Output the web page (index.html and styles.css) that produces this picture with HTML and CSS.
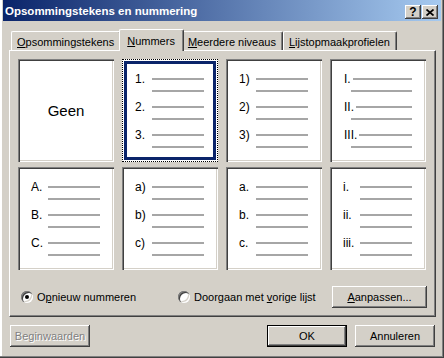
FILE: index.html
```html
<!DOCTYPE html>
<html>
<head>
    <title>Opsommingstekens en nummering</title>
    <link rel="stylesheet" href="styles.css">
</head>
<body>
    <div class="window">
        <div class="titlebar">
            <span class="title">Opsommingstekens en nummering</span>
            <div class="title-buttons">
                <button class="title-btn help">?</button>
                <button class="title-btn close">
                    <svg width="8" height="7" viewBox="0 0 8 7"><path d="M0.5 0.5 L7.5 6.5 M7.5 0.5 L0.5 6.5" stroke="#000" stroke-width="1.7" fill="none"/></svg>
                </button>
            </div>
        </div>

        <div class="content">
            <div class="tabs">
                <div class="tab"><u>O</u>psommingstekens</div>
                <div class="tab active"><u>N</u>ummers</div>
                <div class="tab"><u>M</u>eerdere niveaus</div>
                <div class="tab"><u>L</u>ijstopmaakprofielen</div>
            </div>

            <div class="panel">
                <div class="gallery">
                    <div class="cell none">Geen</div>

                    <div class="cell selected">
                        <div class="item"><span class="num">1.</span><span class="rule"></span><span class="rule cont"></span></div>
                        <div class="item"><span class="num">2.</span><span class="rule"></span><span class="rule cont"></span></div>
                        <div class="item"><span class="num">3.</span><span class="rule"></span><span class="rule cont"></span></div>
                    </div>

                    <div class="cell">
                        <div class="item"><span class="num">1)</span><span class="rule"></span><span class="rule cont"></span></div>
                        <div class="item"><span class="num">2)</span><span class="rule"></span><span class="rule cont"></span></div>
                        <div class="item"><span class="num">3)</span><span class="rule"></span><span class="rule cont"></span></div>
                    </div>

                    <div class="cell roman">
                        <div class="item"><span class="num">I.</span><span class="rule"></span><span class="rule cont"></span></div>
                        <div class="item"><span class="num">II.</span><span class="rule"></span><span class="rule cont"></span></div>
                        <div class="item"><span class="num">III.</span><span class="rule"></span><span class="rule cont"></span></div>
                    </div>

                    <div class="cell">
                        <div class="item"><span class="num">A.</span><span class="rule"></span><span class="rule cont"></span></div>
                        <div class="item"><span class="num">B.</span><span class="rule"></span><span class="rule cont"></span></div>
                        <div class="item"><span class="num">C.</span><span class="rule"></span><span class="rule cont"></span></div>
                    </div>

                    <div class="cell">
                        <div class="item"><span class="num">a)</span><span class="rule"></span><span class="rule cont"></span></div>
                        <div class="item"><span class="num">b)</span><span class="rule"></span><span class="rule cont"></span></div>
                        <div class="item"><span class="num">c)</span><span class="rule"></span><span class="rule cont"></span></div>
                    </div>

                    <div class="cell">
                        <div class="item"><span class="num">a.</span><span class="rule"></span><span class="rule cont"></span></div>
                        <div class="item"><span class="num">b.</span><span class="rule"></span><span class="rule cont"></span></div>
                        <div class="item"><span class="num">c.</span><span class="rule"></span><span class="rule cont"></span></div>
                    </div>

                    <div class="cell">
                        <div class="item"><span class="num">i.</span><span class="rule"></span><span class="rule cont"></span></div>
                        <div class="item"><span class="num">ii.</span><span class="rule"></span><span class="rule cont"></span></div>
                        <div class="item"><span class="num">iii.</span><span class="rule"></span><span class="rule cont"></span></div>
                    </div>
                </div>

                <div class="options">
                    <label class="option first"><span class="radio checked"></span><span>O<u>p</u>nieuw nummeren</span></label>
                    <label class="option"><span class="radio"></span><span>Doorgaan met <u>v</u>orige lijst</span></label>
                    <button class="btn wide"><u>A</u>anpassen...</button>
                </div>
            </div>

            <div class="footer">
                <button class="btn disabled">Beginwaarden</button>
                <button class="btn default">OK</button>
                <button class="btn">Annuleren</button>
            </div>
        </div>
    </div>
</body>
</html>
```

FILE: styles.css
```css
* {
    box-sizing: border-box;
}
body {
    margin: 0;
    background-color: #d4d0c8;
    font-family: "Liberation Sans", Arial, sans-serif;
    font-size: 11px;
    color: #000;
}
.window {
    width: 444px;
    height: 358px;
    padding: 0 3px 3px 3px;
    background-color: #d4d0c8;
    box-shadow: inset -1px -1px #404040, inset -2px -2px #808080, inset 2px 0 #fff;
}
.titlebar {
    display: flex;
    align-items: center;
    height: 21px;
    padding: 0 3px 0 2px;
    background: linear-gradient(to right, #0a246a, #a6caf0);
}
.title {
    flex: 1;
    color: #fff;
    font-weight: bold;
    font-size: 11.5px;
    padding-top: 1px;
}
.title-buttons {
    display: flex;
    gap: 1px;
    margin-top: 3px;
}
.title-btn {
    width: 16px;
    height: 14px;
    padding: 0;
    border: none;
    display: flex;
    align-items: center;
    justify-content: center;
    background-color: #d4d0c8;
    box-shadow: inset -1px -1px #404040, inset 1px 1px #fff, inset -2px -2px #808080;
    font-family: "Liberation Sans", Arial, sans-serif;
    font-weight: bold;
    font-size: 12px;
    line-height: 1;
}
.content {
    padding: 8px 5px 0 6px;
}
.tabs {
    display: flex;
    align-items: flex-end;
    height: 21px;
    padding-left: 2px;
}
.tab {
    position: relative;
    height: 19px;
    padding: 2px 6px 0 5px;
    display: flex;
    align-items: center;
    border-top: 1px solid #fff;
    border-left: 1px solid #fff;
    border-right: 1px solid #404040;
    border-radius: 2px 2px 0 0;
    box-shadow: inset -1px 0 #808080;
    white-space: nowrap;
}
.tab.active {
    height: 22px;
    margin: 0 -2px -1px -2px;
    padding: 0 8px 0 7px;
    z-index: 1;
    background-color: #d4d0c8;
}
.panel {
    height: 267px;
    padding: 8px;
    border-top: 1px solid #fff;
    border-left: 1px solid #fff;
    border-right: 1px solid #404040;
    border-bottom: 1px solid #404040;
    box-shadow: inset -1px -1px #808080;
}
.gallery {
    display: grid;
    grid-template-columns: repeat(4, 96px);
    grid-template-rows: 103px 103px;
    column-gap: 8px;
    row-gap: 5px;
}
.cell {
    background-color: #fff;
    padding: 14px 14px 0 13px;
    box-shadow: inset 1px 1px #808080, inset 2px 2px #404040, inset -1px -1px #fff, inset -2px -2px #d4d0c8;
    font-size: 12px;
}
.cell.selected {
    outline: 1px dotted #000;
    outline-offset: -1px;
    box-shadow: inset 0 0 0 2px #fff, inset 0 0 0 5px #0a246a;
}
.cell.none {
    display: flex;
    align-items: center;
    justify-content: center;
    padding: 0;
    font-size: 15px;
}
.item {
    display: flex;
    flex-wrap: wrap;
    width: 69px;
    margin-bottom: 4px;
}
.num {
    width: 17px;
    height: 12px;
    display: flex;
    align-items: center;
    padding-bottom: 1px;
}
.rule {
    flex: 1;
    height: 2px;
    margin: 5px 0;
    background-color: #a6a6a6;
}
.rule.cont {
    flex: 0 0 52px;
    margin-left: 17px;
}
.roman .item {
    margin-left: 1px;
    width: 68px;
}
.roman .num {
    width: auto;
    margin-right: 2px;
}
.roman .rule.cont {
    flex: 0 0 61px;
    margin-left: 7px;
}
.options {
    display: flex;
    align-items: center;
    margin-top: 16px;
    padding-left: 3px;
}
.option {
    display: flex;
    align-items: center;
    gap: 4px;
}
.option.first {
    width: 157px;
}
.radio {
    width: 12px;
    height: 12px;
    border-radius: 50%;
    background-color: #fff;
    box-shadow: inset 1px 1px #808080, inset 2px 2px #404040, inset -1px -1px #fff, inset -2px -2px #d4d0c8;
    display: flex;
    align-items: center;
    justify-content: center;
}
.radio.checked:after {
    content: "";
    width: 4px;
    height: 4px;
    border-radius: 50%;
    background-color: #000;
}
.btn {
    width: 80px;
    height: 22px;
    padding: 0;
    border: none;
    background-color: #d4d0c8;
    box-shadow: inset -1px -1px #404040, inset 1px 1px #fff, inset -2px -2px #808080;
    font-family: "Liberation Sans", Arial, sans-serif;
    font-size: 11px;
    color: #000;
}
.btn.wide {
    width: 95px;
    margin-left: auto;
}
.btn.default {
    box-shadow: inset 0 0 0 1px #000, inset -2px -2px #404040, inset 2px 2px #fff, inset -3px -3px #808080;
}
.btn.disabled {
    color: #808080;
    text-shadow: 1px 1px #fff;
}
.footer {
    display: flex;
    gap: 8px;
    margin-top: 8px;
    padding: 0 1px;
}
.footer .disabled {
    margin-right: auto;
}
```
